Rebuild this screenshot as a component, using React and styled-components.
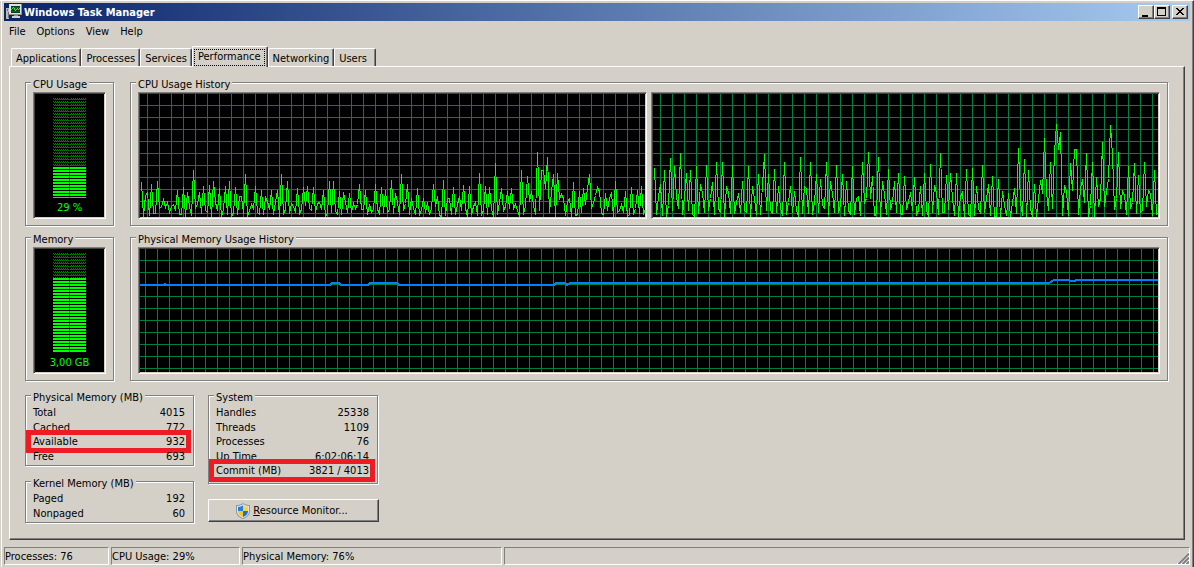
import React from "react";
import styled, { createGlobalStyle, css } from "styled-components";

const face = "#d4d0c8";
const shadow = "#808080";
const dark = "#404040";
const lit = "#00ff00";

const Global = createGlobalStyle`
  * { box-sizing: border-box; }
  html, body, #root { height: 100%; }
  body {
    margin: 0;
    background: ${face};
    color: #000;
    font: 11px/13px "DejaVu Sans Condensed", "DejaVu Sans", Tahoma, sans-serif;
  }
  button { font: inherit; color: inherit; }
`;

const raised = css`
  border: 1px solid;
  border-color: #fff ${dark} ${dark} #fff;
  box-shadow: inset -1px -1px 0 ${shadow};
`;

const Window = styled.div`
  min-height: 100%;
  display: flex;
  flex-direction: column;
  background: ${face};
  border-top: 1px solid #fff;
  border-right: 1px solid ${dark};
  box-shadow: inset 1px 0 0 ${face}, inset 2px 0 0 #fff, inset -1px 0 0 ${shadow};
  padding: 2px 3px 2px 4px;
`;

const TitleBar = styled.header`
  height: 18px;
  display: flex;
  align-items: center;
  gap: 2px;
  padding: 0 2px;
  background: linear-gradient(to right, #0a246a, #a6caf0);
`;

const Title = styled.h1`
  flex: 1;
  margin: 0;
  color: #fff;
  font-size: 11px;
  line-height: 13px;
  font-weight: bold;
`;

const CaptionButtons = styled.div`
  display: flex;
`;

const CaptionButton = styled.button`
  ${raised}
  width: 16px;
  height: 14px;
  padding: 0;
  background: ${face};
  display: flex;
  justify-content: center;
  align-items: center;
  margin-left: ${(p) => (p.$apart ? "2px" : "0")};
`;

const MenuBar = styled.nav`
  display: flex;
  gap: 11px;
  padding: 4px 5px 0;
  height: 25px;
`;

const MenuItem = styled.button`
  border: 0;
  background: none;
  padding: 0;
  height: 13px;
`;

const Tabs = styled.div`
  display: flex;
  align-items: flex-end;
  height: 20px;
  padding-left: 7px;
`;

const Tab = styled.button`
  height: 18px;
  min-width: 42px;
  padding: 1px 4px 0;
  text-align: left;
  background: ${face};
  border: 1px solid;
  border-color: #fff ${dark} transparent #fff;
  border-bottom: 0;
  border-radius: 2px 2px 0 0;
  box-shadow: inset -1px 0 0 ${shadow};
  white-space: nowrap;
  ${(p) =>
    p.$active &&
    css`
      height: 21px;
      margin-bottom: -1px;
      padding: 2px 2px 1px 1px;
      z-index: 1;
    `}
`;

const Focus = styled.span`
  display: block;
  height: 17px;
  padding: 0 3px;
  line-height: 14px;
  border: 1px dotted #000;
`;

const Page = styled.main`
  ${raised}
  flex: 1;
  margin: 0 5px 0 5px;
  padding: 7px 16px 15px 15px;
  display: flex;
  flex-direction: column;
  align-items: stretch;
`;

const Group = styled.fieldset`
  min-width: 0;
  margin: 0;
  padding: 1px 7px 6px;
  border: 1px solid ${shadow};
  box-shadow: 1px 1px 0 #fff, inset 1px 1px 0 #fff;
  ${(p) =>
    p.$list &&
    css`
      margin-right: 1px;
      padding: 1px 8px ${p.$foot || "2px"} 7px;
    `}
`;

const Legend = styled.legend`
  margin-left: -2px;
  padding: 4px 2px 0;
  background: ${face};
`;

const MeterRow = styled.div`
  display: grid;
  grid-template-columns: 89px minmax(0, 1fr);
  gap: 16px;
  margin-bottom: 3px;
`;

const Sunken = styled.div`
  height: 127px;
  background: #000;
  border: 1px solid;
  border-color: ${shadow} #fff #fff ${shadow};
  box-shadow: inset 1px 1px 0 ${dark}, inset -1px -1px 0 ${face};
  padding: 1px;
`;

const Gauge = styled(Sunken)`
  display: flex;
  flex-direction: column;
  align-items: center;
  padding-top: 5px;
  gap: 2px;
  color: ${lit};
`;

const Charts = styled.div`
  display: flex;
  gap: 4px;
  ${Sunken} {
    flex: 1;
    min-width: 0;
  }
`;

const Plot = styled.svg`
  display: block;
  width: 100%;
  height: 123px;
`;

const Bottom = styled.div`
  display: grid;
  grid-template-columns: 170px 171px;
  gap: 13px;
  align-items: start;
  margin-top: 3px;
`;

const Column = styled.div`
  display: flex;
  flex-direction: column;
  gap: ${(p) => p.$gap};
`;

const Table = styled.table`
  width: 100%;
  border-collapse: collapse;
  th, td { padding: 0; font-weight: normal; white-space: nowrap; }
  th { text-align: left; }
  td { text-align: right; }
`;

const Row = styled.tr`
  position: relative;
  height: 14px;
  &:nth-child(odd) { height: 15px; }
  ${(p) =>
    p.$marked &&
    css`
      &::after {
        content: "";
        position: absolute;
        inset: -4px -6px -4px -7px;
        border: 5px solid #ed1c24;
      }
    `}
`;

const PushButton = styled.button`
  ${raised}
  height: 23px;
  padding: 0 3px 0 0;
  background: ${face};
  display: flex;
  align-items: center;
  justify-content: center;
  gap: 3px;
`;

const StatusBar = styled.footer`
  display: grid;
  grid-template-columns: 105px 129px 260px minmax(0, 1fr);
  gap: 2px;
  margin-top: 7px;
`;

const StatusPane = styled.div`
  height: 18px;
  padding: 2px 0;
  border: 1px solid;
  border-color: ${shadow} #fff #fff ${shadow};
  display: flex;
  justify-content: space-between;
  white-space: nowrap;
`;

const Grip = styled.svg`
  margin: 2px 0 -3px auto;
`;

/* One sample every two pixels; 57 is the top of the plot, 426 its floor, three units to a pixel. */
const core0 = [
  322,422,360,351,420,328,414,414,319,400,394,373,396,380,410,392,388,405,346,418,418,337,424,352,392,420,286,400,385,350,
  414,334,405,412,331,424,319,380,406,340,426,400,334,418,319,424,410,337,418,362,362,414,298,424,405,388,400,334,412,418,
  346,418,366,378,402,346,418,380,346,424,298,414,402,319,414,384,392,412,340,414,402,337,390,334,400,406,337,412,384,380,
  402,346,422,414,319,412,319,408,418,348,418,352,380,412,355,412,384,398,388,328,402,402,346,418,388,412,402,328,402,414,
  337,412,346,412,402,316,414,355,380,418,298,405,384,328,418,368,400,418,340,420,402,368,412,382,418,400,328,392,362,420,
  422,316,420,370,370,418,337,418,388,362,405,331,400,422,334,418,394,382,420,295,418,405,334,418,337,402,424,265,418,380,
  340,405,394,348,400,340,400,386,405,422,286,418,390,304,378,348,390,418,232,405,284,286,338,247,412,348,298,422,295,370,
  356,368,420,378,368,422,322,420,418,348,412,338,388,340,298,400,380,360,337,348,414,418,355,405,370,352,424,319,412,405,
  388,412,348,424,418,337,418,400,346,414,334,418,400,
];
const core1 = [
  280,418,362,328,420,286,422,390,250,405,274,362,398,235,418,362,295,405,286,418,422,274,414,328,352,412,271,405,370,322,
  418,262,398,412,262,424,334,352,414,271,414,380,355,412,319,405,412,274,422,334,370,418,298,418,330,238,405,298,405,414,
  283,412,334,398,420,262,418,380,334,412,348,405,422,247,414,334,340,414,262,418,380,298,412,313,390,400,262,418,319,355,
  412,271,412,390,298,420,319,405,418,274,418,370,362,420,262,380,370,232,370,304,420,418,247,424,319,355,418,283,402,380,
  319,412,295,414,418,304,402,378,352,405,307,418,405,334,420,295,405,424,268,412,331,352,418,235,412,412,301,402,295,370,
  420,295,424,362,350,424,283,418,422,280,420,334,400,414,271,412,370,328,420,304,422,422,313,424,348,390,420,355,424,380,
  340,414,220,380,420,253,424,286,402,424,328,422,370,316,355,190,350,405,262,400,230,148,222,172,420,331,348,420,265,346,
  223,223,418,340,313,382,235,424,390,262,424,307,394,370,202,394,348,310,151,240,402,370,232,400,346,360,418,274,400,380,
  265,414,301,412,405,262,394,346,355,420,286,418,410,
];
const memory = [[0, 36], [24, 36], [25, 35], [26, 36], [190, 36], [192, 34], [199, 34], [201, 36], [228, 36], [230, 34], [257, 34], [259, 36], [414, 36], [416, 34], [425, 34], [427, 36], [430, 34], [909, 34], [914, 31], [929, 31], [930, 32], [935, 32], [936, 31], [3000, 31]];

const trace = (samples) =>
  samples.map((s, i) => `${i * 2 + 1},${Math.round((s - 57) / 3)}`).join(" ");

function Chart({ id, label, offset, points, color, width }) {
  return (
    <Sunken>
      <Plot role="img" aria-label={label} shapeRendering="crispEdges">
        <defs>
          <pattern id={id} x={offset} y="11" width="12" height="12" patternUnits="userSpaceOnUse">
            <path d="M0 0H12V1H1V12H0Z" fill="#008040" />
          </pattern>
        </defs>
        <rect width="100%" height="100%" fill={`url(#${id})`} />
        <polyline points={points} fill="none" stroke={color} strokeWidth={width} transform={width === 1 ? "translate(0.5 0.5)" : undefined} />
      </Plot>
    </Sunken>
  );
}

function Level({ id, litFrom, value }) {
  return (
    <Gauge>
      <svg width="33" height="101" shapeRendering="crispEdges" aria-hidden="true">
        <defs>
          <pattern id={`${id}-dim`} width="2" height="3" patternUnits="userSpaceOnUse">
            <path d="M0 0h1v1H0zM1 1h1v1H1z" fill="#008000" />
          </pattern>
          <pattern id={`${id}-lit`} y={litFrom} width="33" height="3" patternUnits="userSpaceOnUse">
            <path d="M0 0h33v2H0z" fill={lit} />
          </pattern>
        </defs>
        <rect width="33" height={litFrom} fill={`url(#${id}-dim)`} />
        <rect y={litFrom} width="33" height={100 - litFrom} fill={`url(#${id}-lit)`} />
        <rect x="16" width="1" height="101" fill="#000" />
      </svg>
      <span>{value}</span>
    </Gauge>
  );
}

function Stats({ title, rows, foot }) {
  return (
    <Group $list $foot={foot}>
      <Legend>{title}</Legend>
      <Table>
        <tbody>
          {rows.map(([name, value, marked]) => (
            <Row key={name} $marked={marked}>
              <th scope="row">{name}</th>
              <td>{value}</td>
            </Row>
          ))}
        </tbody>
      </Table>
    </Group>
  );
}

const AppIcon = () => (
  <svg width="16" height="16" shapeRendering="crispEdges" aria-hidden="true">
    <path d="M0 4h3v11H0z" fill="#b8b8b4" />
    <path d="M1 5h1v2H1zM2 8h1v6H2z" fill="#707070" />
    <path d="M3 0h13v11H3z" fill="#8c8c88" />
    <path d="M3 0h12v10H3z" fill="#e0e0dc" />
    <path d="M5 2h9v7H5z" fill="#06401a" />
    <path d="M5 3h9v1H5zM5 7h9v1H5z" fill="#0c6426" />
    <path d="M5 5h1v1H5zM6 4h1v1H6zM7 3h1v1H7zM8 4h1v2H8zM9 6h1v1H9zM10 5h1v1h-1zM11 4h1v1h-1zM12 5h1v1h-1zM13 4h1v1h-1z" fill="#30f048" />
    <path d="M8 11h4v2H8z" fill="#909090" />
    <path d="M6 12h8v2H6z" fill="#d0d0d0" />
  </svg>
);

const Shield = () => (
  <svg width="14" height="16" viewBox="0 0 14 16" aria-hidden="true">
    <path d="M7 0C5 1.500 3 2 0 2v6c0 4 3 6.500 7 8 4-1.500 7-4 7-8V2C11 2 9 1.500 7 0Z" fill="#8c98a2" />
    <path d="M7 1C5 2.500 3 3 1 3v5c0 3.500 2.500 5.500 6 7 3.500-1.500 6-3.500 6-7V3C11 3 9 2.500 7 1Z" fill="#dce6ee" />
    <path d="M7 2.200C5.500 3.300 4 3.800 2 4v4h5Z" fill="#2480e0" />
    <path d="M7 2.200C8.500 3.300 10 3.800 12 4v4H7Z" fill="#fcd638" />
    <path d="M2 8c0 3 2 4.700 5 6V8Z" fill="#f8c81c" />
    <path d="M12 8c0 3-2 4.700-5 6V8Z" fill="#1c70d4" />
  </svg>
);

export default function App() {
  return (
    <>
      <Global />
      <Window>
        <TitleBar>
          <AppIcon />
          <Title>Windows Task Manager</Title>
          <CaptionButtons>
            <CaptionButton aria-label="Minimize">
              <svg width="10" height="10"><path d="M1 8h6v2H1z" /></svg>
            </CaptionButton>
            <CaptionButton aria-label="Maximize">
              <svg width="10" height="10" shapeRendering="crispEdges"><path fillRule="evenodd" d="M0 0h9v9H0zM1 2v6h7V2z" /></svg>
            </CaptionButton>
            <CaptionButton $apart aria-label="Close">
              <svg width="10" height="8" shapeRendering="crispEdges">
                <path d="M1 0h2v1h1v1h2V1h1V0h2v1H8v1H7v1H6v1h1v1h1v1h1v1H7V6H6V5H4v1H3v1H1V6h1V5h1V4h1V3H3V2H2V1H1z" />
              </svg>
            </CaptionButton>
          </CaptionButtons>
        </TitleBar>
        <MenuBar>
          {["File", "Options", "View", "Help"].map((m) => (
            <MenuItem key={m}>{m}</MenuItem>
          ))}
        </MenuBar>
        <Tabs role="tablist">
          {["Applications", "Processes", "Services", "Performance", "Networking", "Users"].map((t) => {
            const active = t === "Performance";
            return (
              <Tab key={t} role="tab" aria-selected={active} $active={active}>
                {active ? <Focus>{t}</Focus> : t}
              </Tab>
            );
          })}
        </Tabs>
        <Page>
          <MeterRow>
            <Group>
              <Legend>CPU Usage</Legend>
              <Level id="cpu" litFrom={69} value="29 %" />
            </Group>
            <Group>
              <Legend>CPU Usage History</Legend>
              <Charts>
                <Chart id="grid-a" label="CPU 0 usage" offset="7" points={trace(core0)} color={lit} width={1} />
                <Chart id="grid-b" label="CPU 1 usage" offset="7" points={trace(core1)} color={lit} width={1} />
              </Charts>
            </Group>
          </MeterRow>
          <MeterRow>
            <Group>
              <Legend>Memory</Legend>
              <Level id="mem" litFrom={25} value="3,00 GB" />
            </Group>
            <Group>
              <Legend>Physical Memory Usage History</Legend>
              <Charts>
                <Chart id="grid-c" label="Memory usage" offset="5" points={memory.join(" ")} color="#0080ff" width={2} />
              </Charts>
            </Group>
          </MeterRow>
          <Bottom>
            <Column $gap="7px">
              <Stats
                title="Physical Memory (MB)"
                rows={[["Total", "4015"], ["Cached", "772"], ["Available", "932", true], ["Free", "693"]]}
              />
              <Stats title="Kernel Memory (MB)" rows={[["Paged", "192"], ["Nonpaged", "60"]]} />
            </Column>
            <Column $gap="15px">
              <Stats
                title="System"
                foot="5px"
                rows={[
                  ["Handles", "25338"],
                  ["Threads", "1109"],
                  ["Processes", "76"],
                  ["Up Time", "6:02:06:14"],
                  ["Commit (MB)", "3821 / 4013", true],
                ]}
              />
              <PushButton>
                <Shield />
                <span><u>R</u>esource Monitor...</span>
              </PushButton>
            </Column>
          </Bottom>
        </Page>
        <StatusBar>
          <StatusPane>Processes: 76</StatusPane>
          <StatusPane>CPU Usage: 29%</StatusPane>
          <StatusPane>Physical Memory: 76%</StatusPane>
          <StatusPane>
            <Grip width="12" height="12" aria-hidden="true">
              <path d="M0 12L12 0M4 12L12 4M8 12L12 8" stroke="#fff" />
              <path d="M1.500 12L12 1.500M5.500 12L12 5.500M9.500 12L12 9.500" stroke={shadow} strokeWidth="2" />
            </Grip>
          </StatusPane>
        </StatusBar>
      </Window>
    </>
  );
}
